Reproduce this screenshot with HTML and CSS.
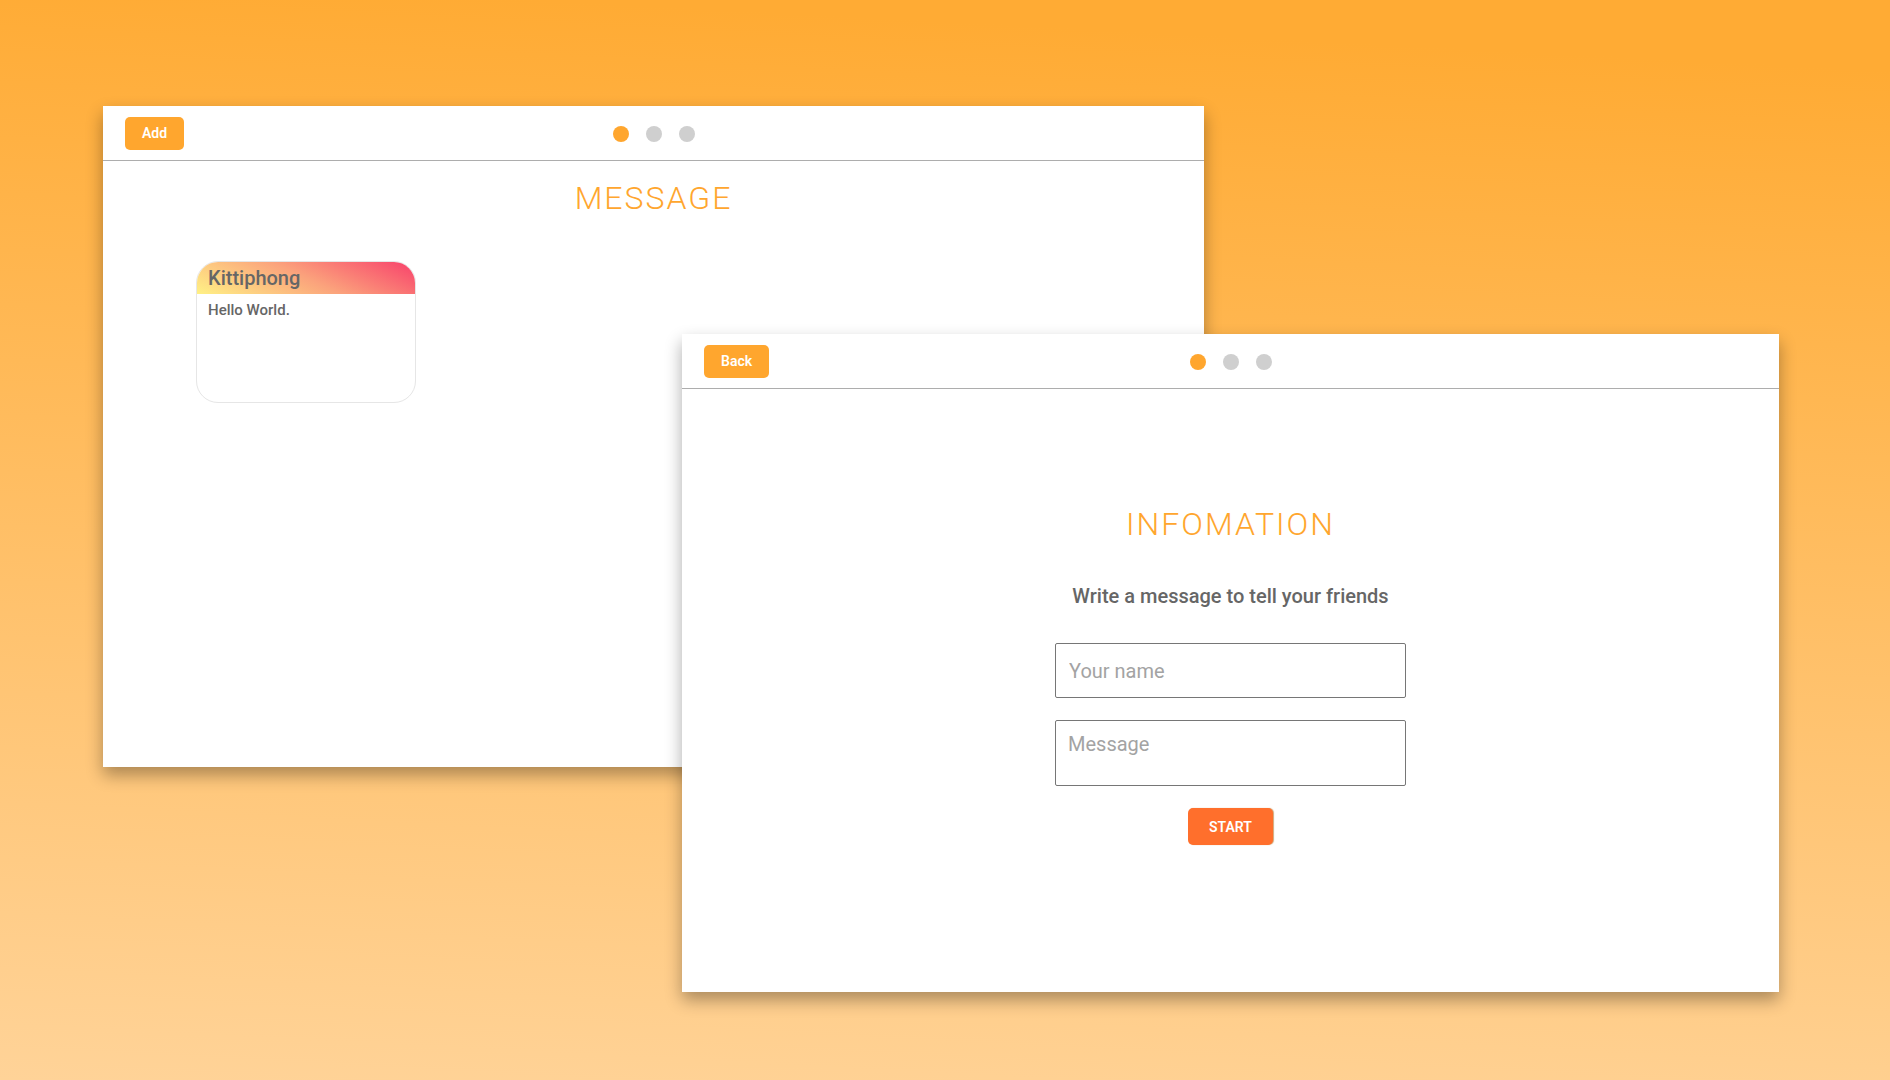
FILE: index.html
```
<!DOCTYPE html>
<html lang="en">
<head>
<meta charset="utf-8">
<meta name="viewport" content="width=device-width, initial-scale=1">
<title>Message</title>
<link rel="stylesheet" href="styles.css">
</head>
<body>
<main class="stage">
  <section class="window window-list">
    <header class="bar">
      <button class="btn" type="button">Add</button>
      <div class="dots"><span class="dot active"></span><span class="dot"></span><span class="dot"></span></div>
    </header>
    <div class="list-body">
      <h1 class="title">MESSAGE</h1>
      <div class="cards">
        <article class="card">
          <h2 class="card-name">Kittiphong</h2>
          <p class="card-text">Hello World.</p>
        </article>
      </div>
    </div>
  </section>
  <section class="window window-form">
    <header class="bar">
      <button class="btn" type="button">Back</button>
      <div class="dots"><span class="dot active"></span><span class="dot"></span><span class="dot"></span></div>
    </header>
    <form class="form">
      <h1 class="title">INFOMATION</h1>
      <p class="lead">Write a message to tell your friends</p>
      <input class="field" type="text" placeholder="Your name" aria-label="Your name">
      <textarea class="field area" placeholder="Message" aria-label="Message"></textarea>
      <button class="btn start" type="button">START</button>
    </form>
  </section>
</main>
</body>
</html>
```
FILE: styles.css
```
* { box-sizing: border-box; }

body {
  margin: 0;
  font-family: Roboto, "Noto Sans", sans-serif;
  color: #666;
}

h1, h2, p { margin: 0; }

.stage {
  display: grid;
  grid-template-columns: 103fr 579fr 522fr 575fr 111fr;
  grid-template-rows: 106fr 228fr 433fr 225fr 88fr;
  min-height: 100vh;
  background: linear-gradient(183deg, #ffab34 6%, #ffd398);
}

.window {
  display: flex;
  flex-direction: column;
  min-width: 0;
  background: #fff;
  box-shadow: 0 8px 16px rgba(0, 0, 0, 0.33);
}

.window-list { grid-area: 2 / 2 / 4 / 4; }
.window-form { grid-area: 3 / 3 / 5 / 5; }

.bar {
  display: grid;
  grid-template-columns: 1fr auto 1fr;
  align-items: center;
  height: 55px;
  padding: 0 22px;
  border-bottom: 1px solid #adadad;
}

.btn {
  justify-self: start;
  height: 33px;
  padding: 0 17px;
  border: 0;
  border-radius: 5px;
  background: #ffa62e;
  color: #fff;
  font: 600 14px/20px Roboto, sans-serif;
}

.dots { display: flex; gap: 17px; padding-top: 2px; }

.dot {
  width: 16px;
  height: 16px;
  border-radius: 50%;
  background: #cfcfcf;
}

.dot.active { background: #ffa62e; }

.title {
  color: #ffa62e;
  font: 300 32px/40px Roboto, sans-serif;
  letter-spacing: 2px;
  text-align: center;
}

.list-body { padding: 17px 93px; }

.cards { display: flex; flex-wrap: wrap; gap: 24px; margin-top: 43px; }

.card {
  width: 220px;
  height: 142px;
  overflow: hidden;
  border: 1px solid #e6e6e6;
  border-radius: 22px;
}

.card-name {
  padding: 0 11px;
  background: linear-gradient(25deg, #fff185, #fba37c 50%, #f8416b);
  font-size: 20px;
  font-weight: 500;
  line-height: 32px;
}

.card-text {
  padding: 6px 11px;
  font-size: 15px;
  font-weight: 500;
  line-height: 20px;
}

.form {
  display: flex;
  flex: 1;
  flex-direction: column;
  align-items: center;
  padding: 115px 24px 24px;
}

.lead {
  margin: 40px 0 35px;
  font-size: 20px;
  font-weight: 500;
  line-height: 24px;
}

.field {
  width: 351px;
  max-width: 100%;
  height: 55px;
  margin-bottom: 22px;
  padding: 0 13px;
  border: 1px solid #767676;
  border-radius: 2px;
  background: #fff;
  color: #666;
  font: 20px/24px Roboto, sans-serif;
}

.field::placeholder { color: #a3a3a3; opacity: 1; }

.area { height: 66px; padding: 11px 12px; resize: none; }

.start {
  align-self: center;
  height: 37px;
  padding: 0 21px;
  background: #ff6f2c;
  box-shadow: 1px 0 1px #d2a878;
}
```
